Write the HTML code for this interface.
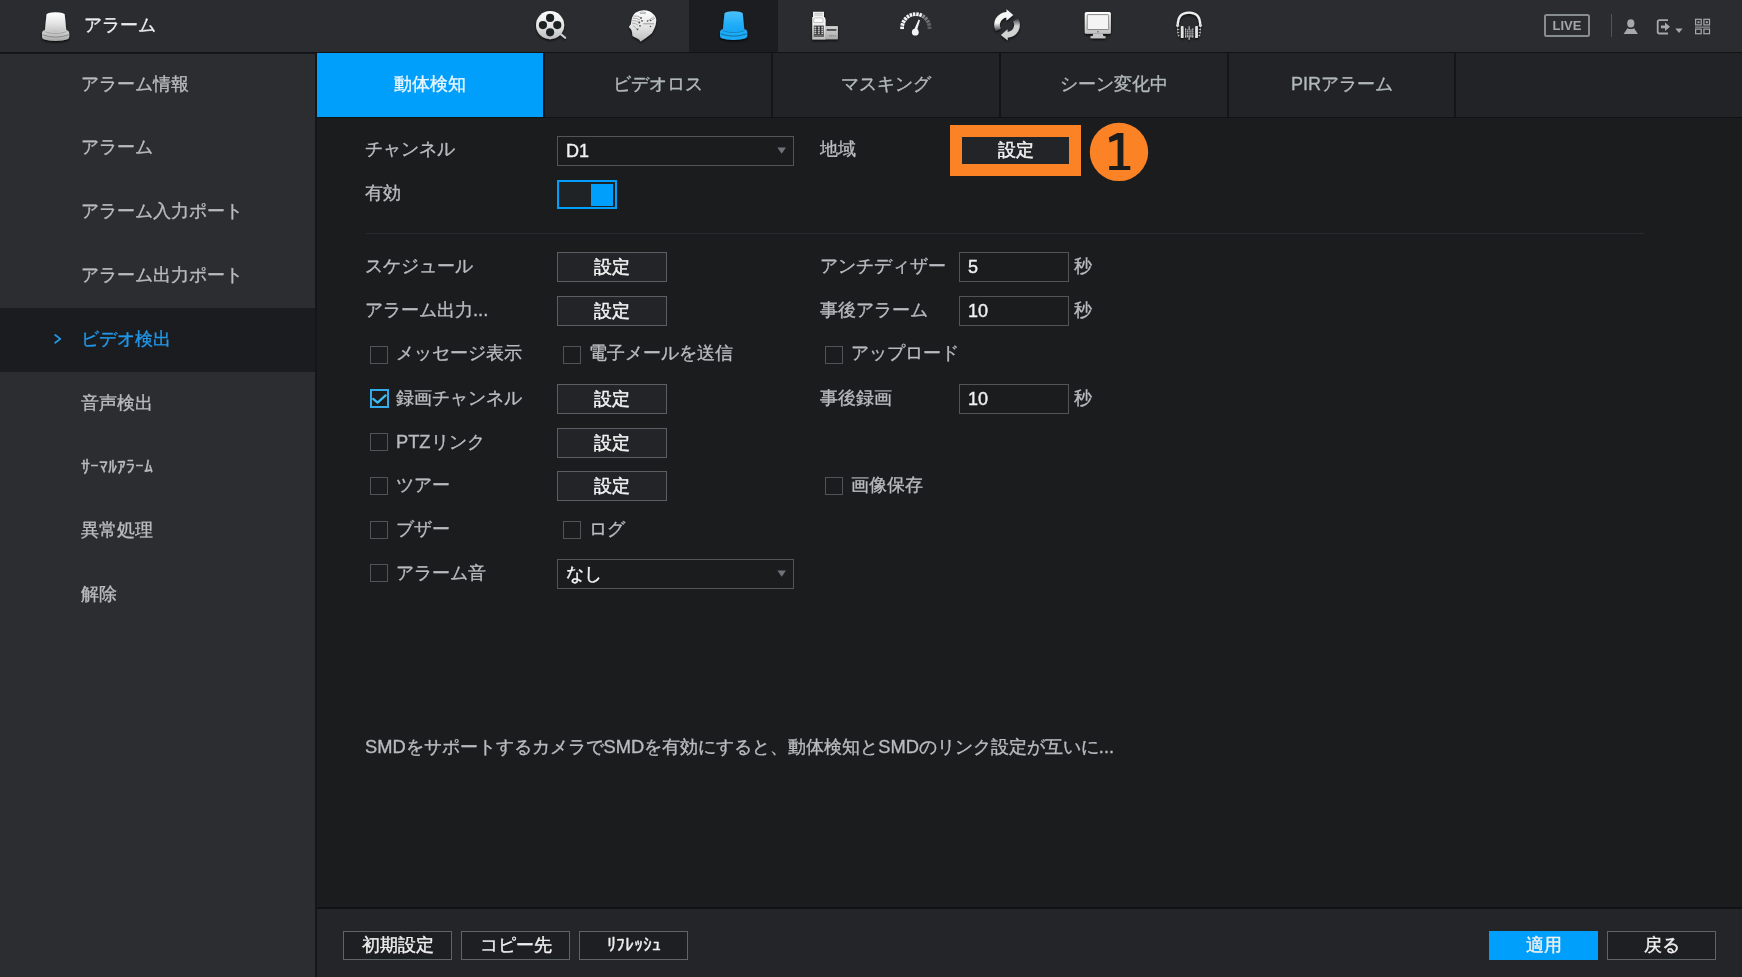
<!DOCTYPE html>
<html lang="ja">
<head>
<meta charset="utf-8">
<style>
*{box-sizing:border-box;margin:0;padding:0}
html,body{width:1742px;height:977px;overflow:hidden;background:#1b1c1e;font-family:"Liberation Sans",sans-serif;}
.abs{position:absolute}
#top{left:0;top:0;width:1742px;height:52px;background:#2b2c30}
#topline{left:0;top:52px;width:1742px;height:1px;background:#111213}
#topline2{left:0;top:53px;width:317px;height:1px;background:#17181a}
#side{left:0;top:54px;width:315px;height:923px;background:#2c2d31;border-top:0}
#sideline{left:315px;top:53px;width:2px;height:924px;background:#151618}
.si{position:absolute;left:81px;font-size:18.3px;font-weight:500;-webkit-text-stroke:0.35px currentColor;color:#b9bcbe;line-height:30px;white-space:nowrap}
#tabs{left:317px;top:53px;width:1425px;height:64px;background:#222327}
#tabline{left:317px;top:117px;width:1425px;height:1px;background:#111213}
.tab{position:absolute;top:0;height:64px;width:226px;text-align:center;line-height:63px;font-size:18px;-webkit-text-stroke:0.35px currentColor;color:#b2bab8}
.tsep{position:absolute;top:0;width:2px;height:64px;background:#141517}
#content{left:317px;top:118px;width:1425px;height:790px;background:#1b1c1e}
.lb{position:absolute;font-size:18.3px;font-weight:500;-webkit-text-stroke:0.35px currentColor;color:#b8bcbf;line-height:30px;white-space:nowrap}
.btn{position:absolute;width:110px;height:30px;border:1px solid #5b5f62;background:#232428;color:#f2f2f2;font-size:18px;-webkit-text-stroke:0.5px currentColor;text-align:center;line-height:28px}
.inp{position:absolute;height:30px;border:1px solid #505556;background:#1b1c1e;color:#f2f2f2;font-size:18px;-webkit-text-stroke:0.4px currentColor;line-height:28px;padding-left:8px}
.cb{position:absolute;width:18px;height:18px;border:1px solid #505456;background:#1b1c1e}
#foot{left:317px;top:909px;width:1425px;height:68px;background:#242529}
#footline{left:317px;top:907px;width:1425px;height:2px;background:#111213}
.fbtn{position:absolute;top:931px;width:109px;height:29px;border:1px solid #5f6466;background:#1e1f22;color:#f0f0f0;font-size:18px;-webkit-text-stroke:0.4px currentColor;text-align:center;line-height:27px}
</style>
</head>
<body><div style="position:absolute;left:0;top:0;width:1742px;height:977px;will-change:transform">
<div id="top" class="abs"></div>
<div id="topline" class="abs"></div><div id="topline2" class="abs"></div>
<div id="side" class="abs"></div>
<div id="sideline" class="abs"></div>
<div id="tabs" class="abs"></div>
<div id="tabline" class="abs"></div>
<div id="content" class="abs"></div>
<div id="footline" class="abs"></div>
<div id="foot" class="abs"></div>

<!-- top bar -->

<div class="abs" style="left:84px;top:10px;font-size:18.2px;color:#ececec;-webkit-text-stroke:0.35px currentColor;line-height:30px">アラーム</div>
<div class="abs" style="left:689px;top:0;width:89px;height:52px;background:#1c1d20"></div>
<!-- icons -->
<svg class="abs" style="left:0;top:0" width="1742" height="52" viewBox="0 0 1742 52">
<defs>
 <linearGradient id="gw" x1="0" y1="0" x2="0" y2="1">
  <stop offset="0" stop-color="#ffffff"/><stop offset="0.55" stop-color="#e2e2e2"/><stop offset="1" stop-color="#bdbdbd"/>
 </linearGradient>
 <linearGradient id="gb" x1="0" y1="0" x2="0" y2="1">
  <stop offset="0" stop-color="#4cc2f9"/><stop offset="0.6" stop-color="#22aef8"/><stop offset="1" stop-color="#12a4f6"/>
 </linearGradient>
 <linearGradient id="gwb" x1="0" y1="0" x2="0" y2="1">
  <stop offset="0" stop-color="#d5d5d5"/><stop offset="1" stop-color="#a9a9a9"/>
 </linearGradient>
 <filter id="sh" x="-30%" y="-30%" width="160%" height="160%"><feDropShadow dx="0" dy="1.5" stdDeviation="1.3" flood-color="#000" flood-opacity="0.75"/></filter>
 <g id="bell">
  <path d="M2.2 20.2 Q2.6 8 4.4 2.2 Q5 0.3 13.6 0.2 Q22.3 0.3 22.9 2.2 Q24.7 8 25.1 20.2 Z"/>
  <path d="M0 21.5 Q0 18.6 4 18.3 Q13.6 21.5 23.2 18.3 Q27.2 18.6 27.2 21.5 L27.2 25.5 Q27.2 29.2 13.6 29.6 Q0 29.2 0 25.5 Z"/>
 </g>
</defs>
<!-- logo -->
<g transform="translate(42,12)" filter="url(#sh)">
 <path fill="url(#gw)" d="M2.7 20.2 L4.5 2.6 Q4.8 0.4 13.6 0.2 Q22.4 0.4 22.7 2.6 L24.5 20.2 Q13.6 23 2.7 20.2Z"/>
 <path fill="url(#gwb)" d="M0 21.5 Q0 18.6 3 18.3 Q13.6 22.5 24.2 18.3 Q27.2 18.6 27.2 21.5 L27.2 25 Q27.2 28.7 13.6 28.9 Q0 28.7 0 25 Z"/>
 <path fill="none" stroke="#7d7d7d" stroke-width="0.8" d="M0.6 22.8 Q13.6 27.5 26.6 22.8"/>
 <path fill="none" stroke="#8a8a8a" stroke-width="0.6" d="M2.5 19.6 Q13.6 23.6 24.7 19.6"/>
</g>
<!-- active bell -->
<g transform="translate(720,11)" filter="url(#sh)">
 <path fill="url(#gb)" d="M2.7 20.2 L4.5 2.6 Q4.8 0.4 13.6 0.2 Q22.4 0.4 22.7 2.6 L24.5 20.2 Q13.6 23 2.7 20.2Z"/>
 <path fill="#1eabf7" d="M0 21.5 Q0 18.6 3 18.3 Q13.6 22.5 24.2 18.3 Q27.2 18.6 27.2 21.5 L27.2 25 Q27.2 28.7 13.6 28.9 Q0 28.7 0 25 Z"/>
 <path fill="none" stroke="#0f5e8a" stroke-width="0.8" d="M0.6 22.8 Q13.6 27.5 26.6 22.8"/>
 <path fill="none" stroke="#116a99" stroke-width="0.6" d="M2.5 19.6 Q13.6 23.6 24.7 19.6"/>
</g>
<!-- film reel -->
<g filter="url(#sh)">
 <path fill="none" stroke="#cfcfcf" stroke-width="2" stroke-linecap="round" d="M560 33.5 L565.2 37.8"/>
 <circle cx="550.1" cy="25.1" r="14.1" fill="url(#gw)"/>
 <g fill="#1f2123">
  <circle cx="550.1" cy="17.9" r="4.1"/><circle cx="550.1" cy="32.3" r="4.1"/>
  <circle cx="542.9" cy="25.1" r="4.1"/><circle cx="557.3" cy="25.1" r="4.1"/>
 </g>
</g>
<!-- head -->
<g transform="translate(617,0)" filter="url(#sh)">
 <path fill="url(#gw)" d="M18.4 12.8 Q22 10.2 26.6 10.2 Q33 10.2 35.8 13.8 Q39.4 17 39.2 20.5 Q39 24.5 37.9 27.1 Q36.5 30.5 34.8 33.3 Q31.5 36 28.7 37.9 L23.5 41.5 Q22.8 39.6 21.5 38.9 Q19 37.8 16.9 36.8 Q15.4 36 15.4 35.3 Q15.2 32.5 14.8 30.7 Q14.2 29.4 13.6 28.7 Q12.2 27.8 12 26.6 Q13 25.6 13.8 24.6 Q14.6 20 15 18 Q16 14.8 18.4 12.8 Z"/>
 <g stroke="#9a9a9a" stroke-width="0.8" fill="none">
  <path d="M16.5 16 Q20.5 15.5 23.5 17.5"/><path d="M15.8 18.3 Q20 17.8 23 20"/><path d="M15.3 20.6 Q19.5 20.3 22.3 22.5"/><path d="M15 23 Q18.5 23 21 25.2"/><path d="M15.8 25.3 L19.5 28.5 L20.5 29.3"/>
  <path d="M26.2 23.8 L37 23.8" stroke-width="1"/><path d="M30.5 21 L36.8 16.8"/><path d="M33.5 20.8 L38 18"/>
  <path d="M22.5 12.3 Q25.8 11.5 29 12.6"/><path d="M23 13.6 Q25.8 13 28.5 13.8"/>
 </g>
 <g fill="#505050"><circle cx="24" cy="18" r="0.9"/><circle cx="25" cy="20.8" r="0.9"/><circle cx="22.3" cy="22.5" r="0.9"/><circle cx="23" cy="25.8" r="0.9"/><circle cx="20.5" cy="29.3" r="0.9"/><circle cx="33.5" cy="26.5" r="0.8"/><circle cx="30.5" cy="21" r="0.8"/><circle cx="33.5" cy="20.5" r="0.8"/></g>
</g>
<!-- POS -->
<g transform="translate(800,0)" filter="url(#sh)">
 <path fill="#f0f0f0" d="M13 11.8 L24 11.8 L24 17 L13 17 Z"/>
 <g stroke="#9a9a9a" stroke-width="0.5"><path d="M14.5 13.6 H22.5"/><path d="M14.5 15.2 H22.5"/></g>
 <path fill="url(#gw)" d="M12.3 17 L24.2 17 Q25.6 17.5 25.6 20.5 L25.6 39.4 L12.3 39.4 Z"/>
 <rect x="13.8" y="17.9" width="9.2" height="4.6" rx="0.6" fill="#fbfbfb" stroke="#8a8a8a" stroke-width="0.5"/>
 <rect x="13.8" y="25.6" width="10" height="11.2" fill="#2e2f31"/>
 <g fill="#d4d4d4">
  <rect x="14.3" y="26.6" width="2" height="1.3"/><rect x="14.3" y="28.6" width="2" height="1.3"/><rect x="14.3" y="30.6" width="2" height="1.3"/><rect x="14.3" y="32.6" width="2" height="1.3"/>
  <rect x="17.8" y="26.6" width="2" height="1.3"/><rect x="17.8" y="28.6" width="2" height="1.3"/><rect x="17.8" y="30.6" width="2" height="1.3"/><rect x="17.8" y="32.6" width="2" height="1.3"/>
  <rect x="21.3" y="26.6" width="2" height="1.3"/><rect x="21.3" y="28.6" width="2" height="1.3"/><rect x="21.3" y="30.6" width="2" height="1.3"/><rect x="21.3" y="32.6" width="2" height="1.3"/>
 </g>
 <rect x="13.8" y="34.5" width="10" height="2.3" fill="#6a6a6a"/>
 <path fill="url(#gwb)" d="M25 26.1 L37.9 26.1 L37.9 39.2 L25 39.2 Z"/>
 <rect x="26.6" y="29.2" width="9.8" height="1.5" fill="#2e2f31"/>
 <g fill="#7a7a7a"><rect x="29.2" y="35.3" width="1.2" height="1"/><rect x="31" y="35.3" width="1.2" height="1"/><rect x="32.8" y="35.3" width="1.2" height="1"/><rect x="34.6" y="35.3" width="1.2" height="1"/></g>
</g>
<!-- gauge -->
<g transform="translate(890,0)">
<line x1="14.00" y1="27.80" x2="10.20" y2="27.80" stroke="#f4f4f4" stroke-width="2.5"/>
<line x1="14.34" y1="24.98" x2="10.65" y2="24.07" stroke="#f4f4f4" stroke-width="2.5"/>
<line x1="15.35" y1="22.32" x2="11.99" y2="20.55" stroke="#f4f4f4" stroke-width="2.5"/>
<line x1="16.97" y1="19.98" x2="14.12" y2="17.46" stroke="#f4f4f4" stroke-width="2.5"/>
<line x1="19.10" y1="18.09" x2="16.94" y2="14.96" stroke="#f4f4f4" stroke-width="2.5"/>
<line x1="21.62" y1="16.77" x2="20.27" y2="13.21" stroke="#f4f4f4" stroke-width="2.5"/>
<line x1="24.38" y1="16.09" x2="23.92" y2="12.31" stroke="#f4f4f4" stroke-width="2.5"/>
<line x1="27.22" y1="16.09" x2="27.68" y2="12.31" stroke="#f4f4f4" stroke-width="2.5"/>
<line x1="29.98" y1="16.77" x2="31.33" y2="13.21" stroke="#f4f4f4" stroke-width="2.5"/>
<line x1="32.50" y1="18.09" x2="34.66" y2="14.96" stroke="#8a8d8f" stroke-width="2.5"/>
<line x1="34.63" y1="19.98" x2="37.48" y2="17.46" stroke="#7a7d7f" stroke-width="2.5"/>
<line x1="36.25" y1="22.32" x2="39.61" y2="20.55" stroke="#6c6f71" stroke-width="2.5"/>
<line x1="37.26" y1="24.98" x2="40.95" y2="24.07" stroke="#616466" stroke-width="2.5"/>
<line x1="37.60" y1="27.80" x2="41.40" y2="27.80" stroke="#5a5d5f" stroke-width="2.5"/>
 <path fill="#f4f4f4" d="M28.6 19.6 L30 20.2 L26.9 30.5 L24.2 29.6 Z"/>
 <circle cx="25.3" cy="32.2" r="3.4" fill="#f4f4f4"/>
</g>
<!-- refresh -->
<g transform="translate(981,0)" filter="url(#sh)">
 <defs>
  <linearGradient id="gr1" gradientUnits="userSpaceOnUse" x1="0" y1="23" x2="0" y2="31.5"><stop offset="0" stop-color="#f6f6f6"/><stop offset="1" stop-color="#2e3032"/></linearGradient>
  <linearGradient id="gr2" gradientUnits="userSpaceOnUse" x1="0" y1="18" x2="0" y2="26"><stop offset="0" stop-color="#2e3032"/><stop offset="1" stop-color="#d2d2d2"/></linearGradient>
 </defs>
 <path fill="url(#gr1)" d="M14.9 31.2 A12.8 12.8 0 0 1 25.5 12 L25.5 9.3 L32.2 14.9 L25.5 20.5 L25.5 17.6 A7.2 7.2 0 0 0 19.77 28.4 Z"/>
 <path fill="url(#gr2)" d="M37.1 18.4 A12.8 12.8 0 0 1 26.6 37.6 L26.6 40.3 L19.9 34.9 L26.6 29.3 L26.6 32 A7.2 7.2 0 0 0 32.2 21.2 Z"/>
</g>
<!-- monitor -->
<g transform="translate(1072,0)" filter="url(#sh)">
 <rect x="12.8" y="12" width="26" height="21.8" rx="1.5" fill="url(#gw)"/>
 <rect x="15.2" y="14.6" width="21.5" height="15" rx="0.8" fill="#f4f4f4" stroke="#6a6a6a" stroke-width="0.8"/>
 <circle cx="26" cy="31.8" r="0.7" fill="#555"/>
 <path fill="#c4c4c4" d="M21.2 33.8 L30.8 33.8 L31.2 36 L33.5 36.3 L33.5 38.2 L18.5 38.2 L18.5 36.3 L20.8 36 Z"/>
</g>
<!-- headphones -->
<g transform="translate(1163,0)" filter="url(#sh)">
 <path fill="none" stroke="#f0f0f0" stroke-width="2.3" d="M14.8 25.5 Q14.6 12.6 26 12.6 Q37.4 12.6 37.2 25.5"/>
 <path fill="#d8d8d8" d="M12.8 25.6 L14.6 23.6 L16.4 25.6 L14.6 27.6 Z"/>
 <path fill="#d8d8d8" d="M39.2 25.6 L37.4 23.6 L35.6 25.6 L37.4 27.6 Z"/>
 <g fill="#bcbcbc">
  <path d="M14 28.5 L16.5 29.5 L14 30.5 Z"/><path d="M14.2 31.5 L16.5 32.5 L14.2 33.5 Z"/><path d="M14.8 34.5 L16.8 35.5 L15 36.5 Z"/>
  <path d="M38 28.5 L35.5 29.5 L38 30.5 Z"/><path d="M37.8 31.5 L35.5 32.5 L37.8 33.5 Z"/><path d="M37.2 34.5 L35.2 35.5 L37 36.5 Z"/>
 </g>
 <rect x="17.9" y="26.1" width="2.6" height="12" rx="0.6" fill="#e4e4e4"/>
 <rect x="32.2" y="26.1" width="2.7" height="12" rx="0.6" fill="#e4e4e4"/>
 <g fill="#bdbdbd">
  <rect x="22" y="28.4" width="1.1" height="9.2"/><rect x="23.8" y="29.4" width="1.1" height="7.8"/><rect x="25.6" y="26.2" width="1.1" height="13.6"/><rect x="27.4" y="29.4" width="1.1" height="7.8"/><rect x="29.2" y="28.4" width="1.1" height="9.2"/>
 </g>
 <g fill="#2b2c30"><rect x="21.5" y="30.6" width="9.5" height="0.5"/><rect x="21.5" y="32.6" width="9.5" height="0.5"/><rect x="21.5" y="34.6" width="9.5" height="0.5"/></g>
</g>
<!-- user -->
<g fill="#a5a9ab">
 <ellipse cx="1630.8" cy="23.4" rx="3.6" ry="4.1"/>
 <path d="M1627.5 28.2 Q1630.8 30 1634.1 28.2 L1637.9 34 L1623.6 34 Z"/>
</g>
<!-- logout -->
<g fill="none" stroke="#a5a9ab" stroke-width="1.8">
 <path d="M1668 20.1 L1659.5 20.1 Q1657.7 20.1 1657.7 21.9 L1657.7 31.7 Q1657.7 33.5 1659.5 33.5 L1668 33.5"/>
</g>
<path fill="#a5a9ab" d="M1661 25.4 L1665 25.4 L1665 22.6 L1670 26.8 L1665 31 L1665 28.2 L1661 28.2 Z"/>
<path fill="#a5a9ab" d="M1675.3 28.6 L1682.6 28.6 L1679 33 Z"/>
<!-- qr -->
<g fill="none" stroke="#a5a9ab" stroke-width="1.2">
 <rect x="1695.6" y="19.3" width="5.6" height="5.6"/><rect x="1703.9" y="19.3" width="5.6" height="5.6"/>
 <rect x="1695.6" y="29.1" width="5.6" height="4.6"/><rect x="1703.9" y="29.1" width="5.6" height="4.6"/>
</g>
<g fill="#a5a9ab"><rect x="1697.5" y="21.2" width="2" height="2"/><rect x="1705.8" y="21.2" width="2" height="2"/><rect x="1695" y="26.6" width="15" height="1"/></g>
</svg>


<div class="abs" style="left:1544px;top:14px;width:46px;height:23px;border:2px solid #878c8f;border-radius:2.5px;color:#a2a7aa;font-size:13px;font-weight:bold;text-align:center;line-height:19.5px">LIVE</div>
<div class="abs" style="left:1611px;top:14px;width:1px;height:23px;background:#555"></div>

<!-- sidebar -->
<div class="abs" style="left:0;top:308px;width:315px;height:64px;background:#1b1c1f"></div>
<div class="si" style="top:69px">アラーム情報</div>
<div class="si" style="top:132px">アラーム</div>
<div class="si" style="top:196px">アラーム入力ポート</div>
<div class="si" style="top:260px">アラーム出力ポート</div>
<div class="si" style="top:324px;color:#2196e8">ビデオ検出</div>
<div class="si" style="top:388px">音声検出</div>
<div class="si" style="top:452px">ｻｰﾏﾙｱﾗｰﾑ</div>
<div class="si" style="top:515px">異常処理</div>
<div class="si" style="top:579px">解除</div>

<!-- tabs -->
<div class="abs" style="left:317px;top:53px;width:1425px;height:64px">
 <div class="tab" style="left:0;width:226px;background:#009ffb;color:#eaf6ff">動体検知</div>
 <div class="tsep" style="left:226px"></div>
 <div class="tab" style="left:228px">ビデオロス</div>
 <div class="tsep" style="left:454px"></div>
 <div class="tab" style="left:456px">マスキング</div>
 <div class="tsep" style="left:682px"></div>
 <div class="tab" style="left:684px">シーン変化中</div>
 <div class="tsep" style="left:910px"></div>
 <div class="tab" style="left:912px">PIRアラーム</div>
 <div class="tsep" style="left:1137px"></div>
</div>

<!-- row 1 -->
<div class="lb" style="left:365px;top:134px">チャンネル</div>
<div class="inp" style="left:557px;top:136px;width:237px">D1</div>
<div class="lb" style="left:820px;top:134px">地域</div>
<div class="abs" style="left:950px;top:125px;width:131px;height:51px;border:12px solid #fb8326;background:#232428;color:#f2f2f2;font-size:18px;-webkit-text-stroke:0.5px currentColor;text-align:center;line-height:27px">設定</div>
<svg class="abs" style="left:1080px;top:115px" width="80" height="75" viewBox="1080 115 80 75"><circle cx="1119" cy="151.9" r="29.2" fill="#fb8326"/><path fill="#1b1c1e" d="M1117.3 133 L1123.4 133 L1123.4 166.1 L1130.3 166.1 L1130.3 170 L1109.2 170 L1109.2 166.1 L1117.6 166.1 L1117.6 139.5 L1109.6 142.4 L1108.8 137.6 Z"/></svg>

<div class="lb" style="left:365px;top:178px">有効</div>
<div class="abs" style="left:557px;top:180px;width:60px;height:29px;border:2px solid #009ffb;background:#202326"></div>
<div class="abs" style="left:591px;top:184px;width:22px;height:22px;background:#009ffb"></div>

<div class="abs" style="left:366px;top:233px;width:1278px;height:1px;background:#292a2e"></div>

<!-- rows -->
<div class="lb" style="left:365px;top:251px">スケジュール</div>
<div class="btn" style="left:557px;top:252px">設定</div>
<div class="lb" style="left:820px;top:251px">アンチディザー</div>
<div class="inp" style="left:959px;top:252px;width:110px">5</div>
<div class="lb" style="left:1074px;top:251px">秒</div>

<div class="lb" style="left:365px;top:295px">アラーム出力...</div>
<div class="btn" style="left:557px;top:296px">設定</div>
<div class="lb" style="left:820px;top:295px">事後アラーム</div>
<div class="inp" style="left:959px;top:296px;width:110px">10</div>
<div class="lb" style="left:1074px;top:295px">秒</div>

<div class="cb" style="left:370px;top:346px"></div>
<div class="lb" style="left:396px;top:338px">メッセージ表示</div>
<div class="cb" style="left:563px;top:346px"></div>
<div class="lb" style="left:589px;top:338px">電子メールを送信</div>
<div class="cb" style="left:825px;top:346px"></div>
<div class="lb" style="left:851px;top:338px">アップロード</div>

<div class="cb" style="left:370px;top:389px;width:19px;height:19px;border:2px solid #36a9e8"></div>
<div class="lb" style="left:396px;top:383px">録画チャンネル</div>
<div class="btn" style="left:557px;top:384px">設定</div>
<div class="lb" style="left:820px;top:383px">事後録画</div>
<div class="inp" style="left:959px;top:384px;width:110px">10</div>
<div class="lb" style="left:1074px;top:383px">秒</div>

<div class="cb" style="left:370px;top:433px"></div>
<div class="lb" style="left:396px;top:427px">PTZリンク</div>
<div class="btn" style="left:557px;top:428px">設定</div>

<div class="cb" style="left:370px;top:477px"></div>
<div class="lb" style="left:396px;top:470px">ツアー</div>
<div class="btn" style="left:557px;top:471px">設定</div>
<div class="cb" style="left:825px;top:477px"></div>
<div class="lb" style="left:851px;top:470px">画像保存</div>

<div class="cb" style="left:370px;top:521px"></div>
<div class="lb" style="left:396px;top:514px">ブザー</div>
<div class="cb" style="left:563px;top:521px"></div>
<div class="lb" style="left:589px;top:514px">ログ</div>

<div class="cb" style="left:370px;top:564px"></div>
<div class="lb" style="left:396px;top:558px">アラーム音</div>
<div class="inp" style="left:557px;top:559px;width:237px">なし</div>

<div class="lb" style="left:365px;top:732px">SMDをサポートするカメラでSMDを有効にすると、動体検知とSMDのリンク設定が互いに...</div>


<svg class="abs" style="left:0;top:0" width="1742" height="977" viewBox="0 0 1742 977">
 <path d="M55.2 335 L60.3 338.9 L55.2 342.8" fill="none" stroke="#1f9ae9" stroke-width="1.8" stroke-linecap="round" stroke-linejoin="round"/>
 <path d="M777.4 147.6 L786 147.6 L781.7 153.8 Z" fill="#6e7378"/>
 <path d="M777.4 570.6 L786 570.6 L781.7 576.8 Z" fill="#6e7378"/>
 <path d="M373.2 398.9 L377.6 402.6 L385.6 395.4" fill="none" stroke="#3cbdf6" stroke-width="2.2" stroke-linecap="round" stroke-linejoin="round"/>
</svg>
<!-- footer -->
<div class="fbtn" style="left:343px">初期設定</div>
<div class="fbtn" style="left:461px">コピー先</div>
<div class="fbtn" style="left:579px">ﾘﾌﾚｯｼｭ</div>
<div class="fbtn" style="left:1489px;background:#009ffb;border-color:#009ffb">適用</div>
<div class="fbtn" style="left:1607px">戻る</div>
</div></body>
</html>
